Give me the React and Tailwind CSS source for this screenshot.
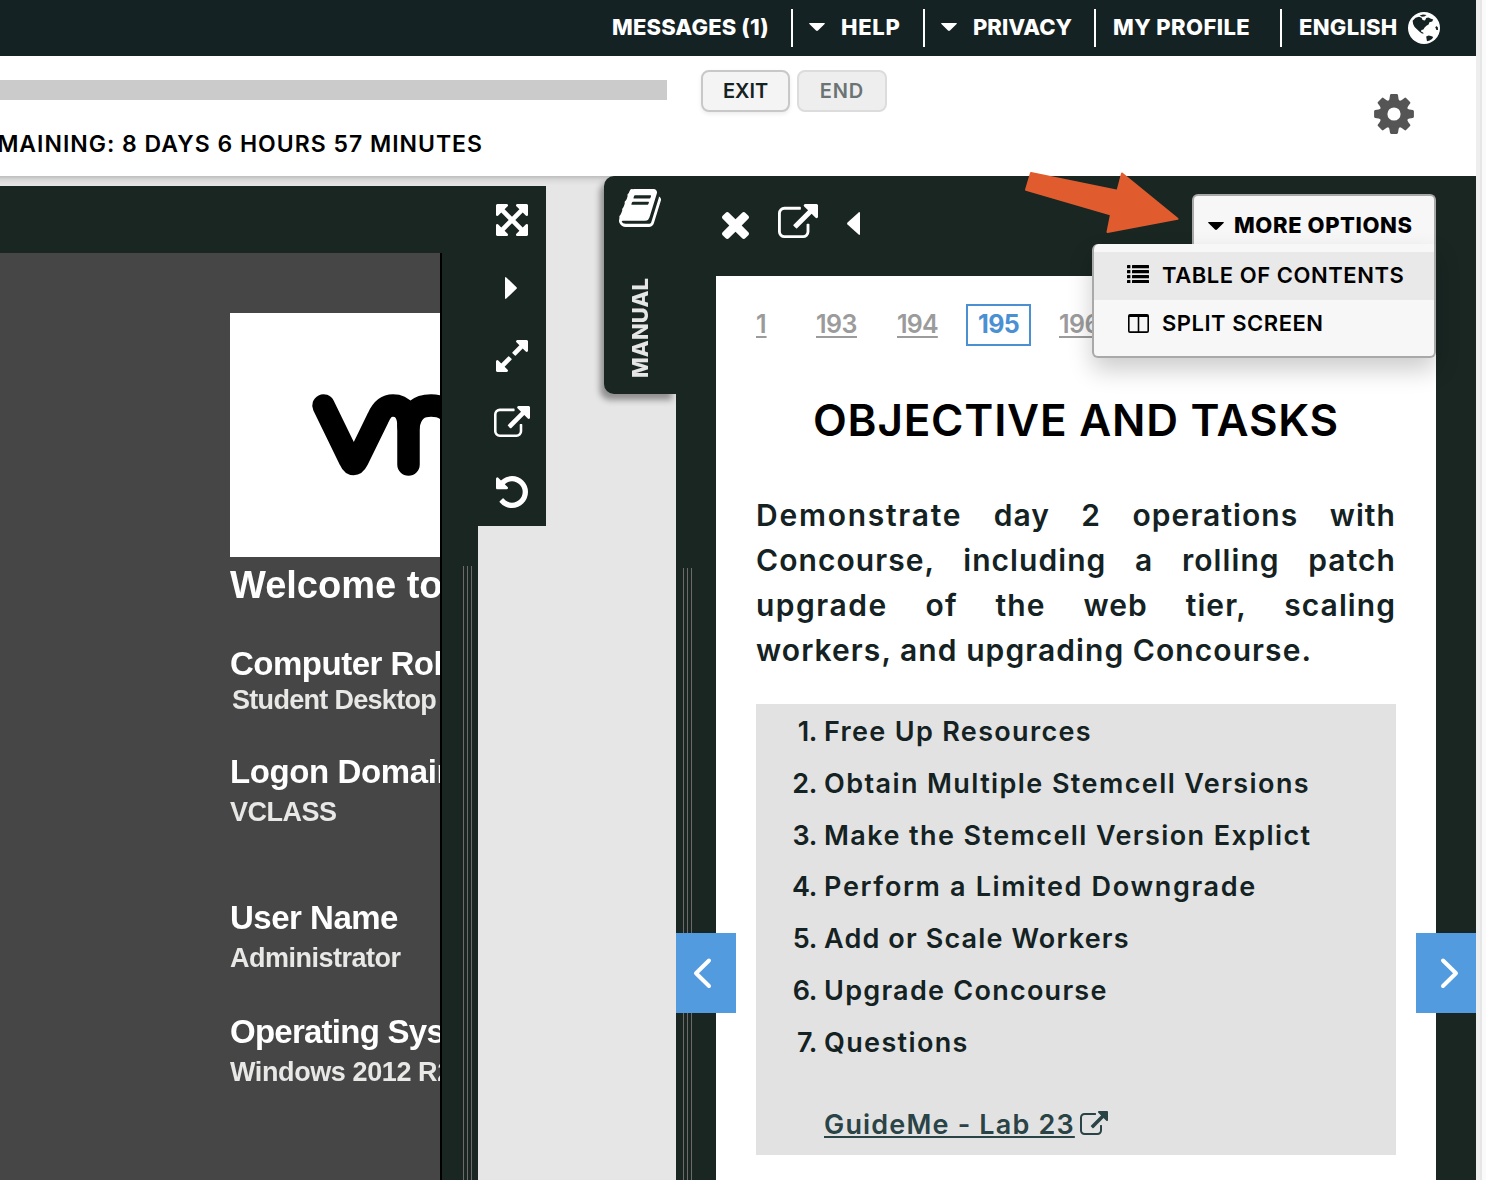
import React from "react";

const PATHS = {
  expandAll:
    "M1411 541l-355 355 355 355 144-144q29-31 70-14 39 17 39 59v448q0 26-19 45t-45 19h-448q-42 0-59-40-17-39 14-69l144-144-355-355-355 355 144 144q31 30 14 69-17 40-59 40h-448q-26 0-45-19t-19-45v-448q0-42 40-59 39-17 69 14l144 144 355-355-355-355-144 144q-19 19-45 19-12 0-24-5-40-17-40-59v-448q0-26 19-45t45-19h448q42 0 59 40 17 39-14 69l-144 144 355 355 355-355-144-144q-31-30-14-69 17-40 59-40h448q26 0 45 19t19 45v448q0 42-39 59-13 5-25 5-26 0-45-19z",
  expand:
    "M883 1056q0 13-10 23l-332 332 144 144q19 19 19 45t-19 45-45 19h-448q-26 0-45-19t-19-45v-448q0-26 19-45t45-19 45 19l144 144 332-332q10-10 23-10t23 10l114 114q10 10 10 23zm781-864v448q0 26-19 45t-45 19-45-19l-144-144-332 332q-10 10-23 10t-23-10l-114-114q-10-10-10-23t10-23l332-332-144-144q-19-19-19-45t19-45 45-19h448q26 0 45 19t19 45z",
  undo:
    "M1664 896q0 156-61 298t-164 245-245 164-298 61q-172 0-327-72.5t-264-204.5q-7-10-6.5-22.5t8.5-20.5l137-138q10-9 25-9 16 2 23 12 73 95 179 147t225 52q104 0 198.5-40.5t163.5-109.5 109.5-163.5 40.5-198.5-40.5-198.5-109.5-163.5-163.5-109.5-198.5-40.5q-98 0-188 35.5t-160 101.5l137 138q31 30 14 69-17 40-59 40h-448q-26 0-45-19t-19-45v-448q0-42 40-59 39-17 69 14l130 129q107-101 244.5-156.5t284.5-55.5q156 0 298 61t245 164 164 245 61 298z",
  times:
    "M1490 1322q0 40-28 68l-136 136q-28 28-68 28t-68-28l-294-294-294 294q-28 28-68 28t-68-28l-136-136q-28-28-28-68t28-68l294-294-294-294q-28-28-28-68t28-68l136-136q28-28 68-28t68 28l294 294 294-294q28-28 68-28t68 28l136 136q28 28 28 68t-28 68l-294 294 294 294q28 28 28 68z",
  external:
    "M1408 928v320q0 119-84.5 203.5t-203.5 84.5h-832q-119 0-203.5-84.5t-84.5-203.5v-832q0-119 84.5-203.5t203.5-84.5h704q14 0 23 9t9 23v64q0 14-9 23t-23 9h-704q-66 0-113 47t-47 113v832q0 66 47 113t113 47h832q66 0 113-47t47-113v-320q0-14 9-23t23-9h64q14 0 23 9t9 23zm384-864v512q0 26-19 45t-45 19-45-19l-176-176-652 652q-10 10-23 10t-23-10l-114-114q-10-10-10-23t10-23l652-652-176-176q-19-19-19-45t19-45 45-19h512q26 0 45 19t19 45z",
  book:
    "M1703 478q40 57 18 129l-275 906q-19 64-76.5 107.5t-122.5 43.5h-923q-77 0-148.5-53.5t-99.5-131.5q-24-67-2-127 0-4 3-27t4-37q1-8-3-21.5t-3-19.5q2-11 8-21t16.5-23.5 16.5-23.5q23-38 45-91.5t30-91.5q3-10 .5-30t-.5-28q3-11 17-28t17-23q21-36 42-92t25-90q1-9-2.5-32t.5-28q4-13 22-30.5t22-22.5q19-26 42.5-84.5t27.5-96.5q1-8-3-25.5t-2-26.5q2-8 9-18t18-23 17-21q8-12 16.5-30.5t15-35 16-36 19.5-32 26.5-23.5 36-11.5 47.5 5.5l-1 3q38-9 51-9h761q74 0 114 56t18 130l-274 906q-36 119-71.5 153.5t-128.5 34.5h-869q-27 0-38 15-11 16-1 43 24 70 144 70h923q29 0 56-15.5t35-41.5l300-987q7-22 5-57 38 15 59 43zm-1064 2q-4 13 2 22.5t20 9.5h608q13 0 25.5-9.5t16.5-22.5l21-64q4-13-2-22.5t-20-9.5h-608q-13 0-25.5 9.5t-16.5 22.5zm-83 256q-4 13 2 22.5t20 9.5h608q13 0 25.5-9.5t16.5-22.5l21-64q4-13-2-22.5t-20-9.5h-608q-13 0-25.5 9.5t-16.5 22.5z",
};

function Glyph({ name, box = "128 128 1536 1536", className }) {
  return (
    <svg viewBox={box} preserveAspectRatio="none" className={`shrink-0 ${className}`} fill="currentColor">
      <path d={PATHS[name]} />
    </svg>
  );
}

function External({ className }) {
  return <Glyph name="external" box="0 0 1792 1536" className={className} />;
}

function CaretDown({ className }) {
  return (
    <svg viewBox="0 0 16 8" className={`h-[8px] w-[16px] shrink-0 ${className}`} fill="currentColor">
      <path d="M0.6 0H15.4Q16.2 .3 15.6 .9L9 7.5Q8 8.3 7 7.5L.4 .9Q-.2 .3 .6 0Z" />
    </svg>
  );
}

function Caret({ className }) {
  return (
    <svg viewBox="0 0 13 23" preserveAspectRatio="none" className={`shrink-0 ${className}`} fill="currentColor">
      <path d="M13 1V22Q12.8 23.4 11.6 22.6L.5 12.4Q-.3 11.5 .5 10.6L11.6 .4Q12.8 -.4 13 1Z" />
    </svg>
  );
}

function Globe() {
  return (
    <svg viewBox="0 0 32 32" className="ml-[10px] mt-[12px] h-[32px] w-[32px] shrink-0">
      <circle cx="16" cy="16" r="16" fill="#fff" />
      <g fill="#152223">
        <path d="M4.6 8.8L7.6 5.8L11 4.8L13.6 5.8L14.6 8L17 8.6L18.2 6L20.4 5.4L22.4 6.6L25.2 7.4L24.2 9.6L21.4 10.2L20.6 12.4L18.4 13.8L16.6 15.6L15.4 17.6L13.4 18L13 19.6L15 20.4L15.8 21.6L14 21.4L11.6 19.8L9.2 17.4L6.6 15L5.2 12.2Z" />
        <path d="M11.6 3.6L15 2.6L18.6 3L16.4 4.4L14 4.8Z" />
        <path d="M18.2 24.4L20.6 23.4L23 24L25.2 25L24 27L21.6 28.4L19 29.2L18.6 27Z" />
        <path d="M27.4 15.6L28.2 14L29.8 15.2L30 18L28.4 18Z" />
      </g>
    </svg>
  );
}

function Gear() {
  return (
    <svg viewBox="-20 -20 40 40" className="mr-[62px] mt-[38px] h-[40px] w-[40px]" fill="#555">
      <path
        fillRule="evenodd"
        d="M0 -14.6A14.6 14.6 0 1 0 0 14.6A14.6 14.6 0 1 0 0 -14.6ZM0 -6.6A6.6 6.6 0 1 1 0 6.6A6.6 6.6 0 1 1 0 -6.6Z"
      />
      {[0, 45, 90, 135, 180, 225, 270, 315].map((a) => (
        <path key={a} transform={`rotate(${a})`} d="M-5.4 -12.8Q-4.3 -15 -4 -18.8Q-3.8 -19.9 -2.8 -19.9H2.8Q3.8 -19.9 4 -18.8Q4.3 -15 5.4 -12.8Z" />
      ))}
    </svg>
  );
}

function Divider() {
  return <div className="mt-[9px] h-[38px] w-[2px] shrink-0 bg-white" />;
}

function NavText({ className, children }) {
  return <span className={`h-[54px] shrink-0 leading-[54px] ${className}`}>{children}</span>;
}

function Header() {
  return (
    <header className="flex h-[56px] shrink-0 bg-[#152223] text-[22px] font-extrabold whitespace-nowrap text-white">
      <NavText className="ml-[612px] w-[179px] tracking-[0.15px]">MESSAGES (1)</NavText>
      <Divider />
      <CaretDown className="mt-[23px] ml-[16px]" />
      <NavText className="ml-[16px] w-[82px] tracking-[0.7px]">HELP</NavText>
      <Divider />
      <CaretDown className="mt-[23px] ml-[16px]" />
      <NavText className="ml-[16px] w-[121px]">PRIVACY</NavText>
      <Divider />
      <NavText className="ml-[17px] w-[167px] tracking-[0.4px]">MY PROFILE</NavText>
      <Divider />
      <NavText className="ml-[17px] w-[99px] tracking-[0.3px]">ENGLISH</NavText>
      <Globe />
    </header>
  );
}

function Toolbar() {
  return (
    <section className="flex h-[120px] shrink-0 justify-between bg-white">
      <div>
        <div className="flex">
          <div className="mt-[24px] h-[20px] w-[667px] bg-[#cbcbcb]" />
          <button className="mt-[14px] ml-[34px] h-[42px] w-[89px] rounded-[8px] border-2 border-[#c8c8c8] bg-[#f4f4f4] text-[20px] font-semibold text-[#152223] shadow-[0_2px_4px_rgba(0,0,0,0.08)]">
            EXIT
          </button>
          <button className="mt-[14px] ml-[7px] h-[42px] w-[90px] rounded-[8px] border-2 border-[#dcdcdc] bg-[#eeeeee] text-[20px] font-semibold tracking-[0.9px] text-[#6b7475]">
            END
          </button>
        </div>
        <div className="mt-[17px] flex h-[30px] w-[483px] justify-end overflow-hidden text-[23px] leading-[30px] font-semibold tracking-[1px] whitespace-nowrap text-black">
          MAINING: 8 DAYS 6 HOURS 57 MINUTES
        </div>
      </div>
      <Gear />
    </section>
  );
}

function Grip({ className }) {
  return (
    <div className={`flex gap-[3px] ${className}`}>
      <div className="w-px bg-[#6e6a69]" />
      <div className="w-px bg-[#6e6a69]" />
      <div className="w-px bg-[#6e6a69]" />
    </div>
  );
}

function VmLogo() {
  return (
    <svg viewBox="230 313 210 244" className="h-[244px] w-[210px] bg-white" fill="none" stroke="#000" strokeWidth="22.5" strokeLinecap="round" strokeLinejoin="round">
      <path d="M323.5 405.5L350 460Q353.5 468 357.5 460L378 418C382 409 386 405.5 393 405.5C403 405.5 408.5 413 408.5 426V464.5" />
      <path d="M408.5 426C411 411 419 405.5 431 405.5Q455 406 455 430" />
    </svg>
  );
}

function RemoteDesktop() {
  return (
    <div className="h-[927px] w-[442px] overflow-hidden border-r-2 border-black bg-[#464646] pt-[60px] pl-[230px]">
      <div className="font-['Liberation_Sans',sans-serif] font-bold whitespace-nowrap text-white blur-[0.5px]">
        <VmLogo />
        <div className="h-[57px] text-[38px] leading-[57px]">Welcome to</div>
        <div className="mt-[30px] h-[40px] text-[33px] leading-[40px] tracking-[-0.5px]">Computer Role</div>
        <div className="h-[33px] pl-[2px] text-[27px] leading-[33px] tracking-[-0.7px] text-[#e8e8e6]">Student Desktop</div>
        <div className="mt-[35px] h-[40px] text-[33px] leading-[39px] tracking-[-0.4px]">Logon Domain</div>
        <div className="h-[41px] text-[27px] leading-[41px] tracking-[-0.5px] text-[#e8e8e6]">VCLASS</div>
        <div className="mt-[65px] h-[40px] text-[33px] leading-[40px] tracking-[-0.5px]">User Name</div>
        <div className="h-[41px] text-[27px] leading-[41px] tracking-[-0.5px] text-[#e8e8e6]">Administrator</div>
        <div className="mt-[33px] h-[40px] text-[33px] leading-[40px] tracking-[-0.75px]">Operating System</div>
        <div className="h-[41px] text-[27px] leading-[41px] tracking-[-0.4px] text-[#e8e8e6]">Windows 2012 R2</div>
      </div>
    </div>
  );
}

function DesktopPanel() {
  return (
    <div className="flex pt-[10px]">
      <div>
        <div className="h-[67px] w-[442px] bg-[#192622]" />
        <RemoteDesktop />
      </div>
      <div className="w-[36px] bg-[#192622]">
        <Grip className="mt-[380px] ml-[21px] h-[614px]" />
      </div>
      <div className="flex h-[340px] w-[68px] flex-col items-center bg-[#192622] text-white">
        <Glyph name="expandAll" className="mt-[18px] h-[32px] w-[32px]" />
        <Caret className="mt-[41px] mr-[2px] h-[22px] w-[12px] rotate-180" />
        <Glyph name="expand" className="mt-[41px] h-[32px] w-[32px]" />
        <External className="mt-[34px] h-[31px] w-[36px]" />
        <Glyph name="undo" className="mt-[39px] h-[32px] w-[32px]" />
      </div>
    </div>
  );
}

function Pages() {
  const link = "h-[42px] leading-[41px] underline decoration-2 underline-offset-[3px]";
  return (
    <div className="mt-[28px] flex h-[42px] pl-[40px] text-[25px] font-semibold text-[#9b9b9b]">
      <a className={`${link} w-[60px]`}>1</a>
      <a className={`${link} w-[81px] tracking-[-0.5px]`}>193</a>
      <a className={`${link} w-[69px] tracking-[-0.8px]`}>194</a>
      <div className="flex h-[42px] w-[65px] items-center justify-center border-2 border-[#4a90d2] font-bold tracking-[-0.7px] text-[#4a90d2]">195</div>
      <a className={`${link} ml-[28px] tracking-[-0.5px]`}>196</a>
    </div>
  );
}

const TASKS = [
  ["Free Up Resources", "tracking-[1.33px]"],
  ["Obtain Multiple Stemcell Versions", "tracking-[1.41px]"],
  ["Make the Stemcell Version Explict", "tracking-[1.41px]"],
  ["Perform a Limited Downgrade", "tracking-[1.66px]"],
  ["Add or Scale Workers", "tracking-[1.15px]"],
  ["Upgrade Concourse", "tracking-[1.26px]"],
  ["Questions", "tracking-[1.35px]"],
];

function ManualPage() {
  return (
    <div className="w-[720px] overflow-hidden bg-white">
      <Pages />
      <h1 className="mt-[46px] text-center text-[44px] leading-[56px] font-semibold tracking-[0.78px] text-black">OBJECTIVE AND TASKS</h1>
      <div className="mx-[40px] mt-[45px] w-[640px] text-[30px] leading-[45px] font-semibold tracking-[1.07px] whitespace-nowrap text-[#152223]">
        <p className="[text-align-last:justify]"><span className="tracking-[1.75px]">Demonstrate</span> day 2 operations with</p>
        <p className="[text-align-last:justify]">Concourse, including a rolling patch</p>
        <p className="[text-align-last:justify]"><span className="tracking-[1.5px]">upgrade</span> of the web tier, scaling</p>
        <p>workers, and upgrading Concourse.</p>
      </div>
      <div className="mx-[40px] mt-[31px] h-[451px] bg-[#e2e2e2] pt-[2px] text-[27px] font-semibold whitespace-nowrap text-[#152223]">
        <ol>
          {TASKS.map(([text, tracking], i) => (
            <li key={text} className="flex h-[51.8px] leading-[51.8px]">
              <span className="w-[61px] text-right tracking-[-0.4px]">{i + 1}.</span>
              <span className={`ml-[7px] ${tracking}`}>{text}</span>
            </li>
          ))}
        </ol>
        <div className="mt-[36.4px] flex h-[40px] pl-[68px] leading-[40px] text-[#2a4346]">
          <a className="tracking-[1.17px] underline decoration-2 underline-offset-[2px]">GuideMe - Lab 23</a>
          <External className="mt-[6px] ml-[5px] h-[24px] w-[28px]" />
        </div>
      </div>
    </div>
  );
}

function OptionsMenu() {
  return (
    <div className="absolute top-[18px] right-[40px] flex w-[344px] flex-col items-end font-semibold whitespace-nowrap text-black">
      <div className="flex h-[50px] w-[244px] rounded-t-[6px] border-2 border-b-0 border-[#a9a9a9] bg-[#f7f7f7] text-[22px] leading-[58px] font-extrabold tracking-[0.6px]">
        <CaretDown className="mt-[26px] ml-[14px]" />
        <span className="ml-[10px]">MORE OPTIONS</span>
      </div>
      <div className="h-[114px] w-[344px] rounded-[6px] rounded-tr-none border-2 border-t-0 border-[#a9a9a9] bg-[#f7f7f7] pt-[8px] text-[22px] leading-[47px] shadow-[0_12px_24px_rgba(0,0,0,0.2)]">
        <div className="flex h-[48px] bg-[#e9e9e9]">
          <svg viewBox="0 0 22 18" className="mt-[13px] ml-[33px] h-[18px] w-[22px]">
            {[0, 5, 10, 15].map((y) => (
              <g key={y}>
                <rect x="0" y={y} width="3.4" height="3.2" rx="0.5" />
                <rect x="5" y={y} width="17" height="3.2" rx="0.5" />
              </g>
            ))}
          </svg>
          <span className="ml-[13px] tracking-[0.55px]">TABLE OF CONTENTS</span>
        </div>
        <div className="flex h-[48px]">
          <svg viewBox="0 0 21 19" className="mt-[14px] ml-[34px] h-[19px] w-[21px]">
            <path fillRule="evenodd" d="M2 0H19Q21 0 21 2V17Q21 19 19 19H2Q0 19 0 17V2Q0 0 2 0ZM1.6 3V17.2H9.7V3ZM11.3 3V17.2H19.4V3Z" />
          </svg>
          <span className="ml-[13px] tracking-[0.52px]">SPLIT SCREEN</span>
        </div>
      </div>
    </div>
  );
}

function Pointer() {
  return (
    <svg viewBox="1020 168 162 70" className="absolute top-[-8px] left-[344px] h-[70px] w-[162px]" fill="#e05c2e" stroke="#e05c2e" strokeWidth="2" strokeLinejoin="round">
      <path d="M1031 173L1117.5 190.8L1122 173.5L1177.5 218.8L1107.5 232L1111 214.5L1026 189.8Z" />
    </svg>
  );
}

function PageButton({ className, d }) {
  return (
    <button className={`absolute top-[757px] h-[80px] w-[60px] bg-[#529bdf] ${className}`}>
      <svg viewBox="0 0 60 80" className="h-[80px] w-[60px]" fill="none" stroke="#fff" strokeWidth="4" strokeLinecap="round" strokeLinejoin="round">
        <path d={d} />
      </svg>
    </button>
  );
}

function ManualPanel() {
  return (
    <div className="flex">
      <div className="flex h-[218px] w-[72px] flex-col items-center rounded-l-[10px] bg-[#192622] text-white shadow-[-4px_6px_6px_rgba(0,0,0,0.38)]">
        <Glyph name="book" box="64 128 1664 1536" className="mt-[13px] h-[38px] w-[42px]" />
        <span className="mt-[48px] mr-px h-[103px] rotate-180 text-[22px] leading-[34px] font-extrabold tracking-[0.1px] text-[#e6e6e6] [writing-mode:vertical-rl]">MANUAL</span>
      </div>
      <div className="relative h-[1004px] w-[800px] bg-[#192622]">
        <div className="flex h-[100px] text-white">
          <Glyph name="times" box="302 366 1188 1188" className="mt-[36px] ml-[46px] h-[27px] w-[27px]" />
          <External className="mt-[28px] ml-[29px] h-[34px] w-[40px]" />
          <Caret className="mt-[36px] ml-[29px] h-[23px] w-[13px]" />
        </div>
        <div className="flex h-[904px]">
          <div className="w-[40px]">
            <Grip className="mt-[292px] ml-[7px] h-[612px]" />
          </div>
          <ManualPage />
        </div>
        <PageButton className="left-0" d="M33 27.5L20 40.3L33 53" />
        <PageButton className="right-0" d="M27 27.5L40 40.3L27 53" />
        <OptionsMenu />
        <Pointer />
      </div>
    </div>
  );
}

export default function App() {
  return (
    <div className="flex h-[1180px] w-[1486px] overflow-hidden bg-white font-[Inter,sans-serif]">
      <main className="flex w-[1476px] flex-col">
        <Header />
        <Toolbar />
        <div className="flex h-[1004px] justify-between bg-[#e6e6e6] bg-[linear-gradient(to_bottom,#bdbdbd,#d9d9d9_4px,#e6e6e6_9px)]">
          <DesktopPanel />
          <ManualPanel />
        </div>
      </main>
      <div className="w-[4px] bg-[#eeeeee]" />
      <div className="w-[2px] bg-[#e6e6e6]" />
      <div className="w-[4px] bg-[#fafafa]" />
    </div>
  );
}
